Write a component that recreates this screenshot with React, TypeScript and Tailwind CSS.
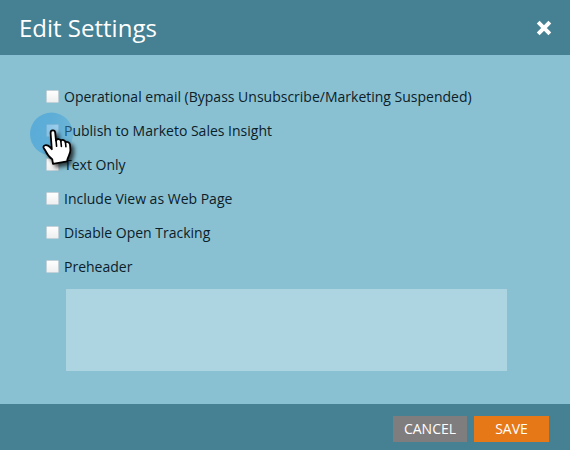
import React from 'react';

const OPTIONS = [
  'Operational email (Bypass Unsubscribe/Marketing Suspended)',
  'Publish to Marketo Sales Insight',
  'Text Only',
  'Include View as Web Page',
  'Disable Open Tracking',
  'Preheader',
];

function CloseIcon() {
  return (
    <svg width="16" height="16" viewBox="0 0 16 16" className="block">
      <path d="M3.6 3.6 12.4 12.4 M12.4 3.6 3.6 12.4" stroke="#fff" strokeWidth="4" strokeLinecap="square" strokeLinejoin="round" />
    </svg>
  );
}

function Pointer() {
  return (
    <svg width="60" height="70" viewBox="0 0 60 70" className="pointer-events-none absolute left-[-21px] top-[27px] overflow-visible">
      <defs>
        <filter id="shadow" x="-30%" y="-30%" width="180%" height="180%">
          <feDropShadow dx="3" dy="3" stdDeviation="2" floodColor="#000" floodOpacity="0.7" />
        </filter>
        <linearGradient id="halo" x1="0" y1="0" x2="1" y2="0.3">
          <stop offset="0" stopColor="#3d9fda" stopOpacity="0.62" />
          <stop offset="0.5" stopColor="#3d9fda" stopOpacity="0.58" />
          <stop offset="1" stopColor="#3d9fda" stopOpacity="0.36" />
        </linearGradient>
      </defs>
      <circle cx="26.5" cy="27" r="21.5" fill="url(#halo)" />
      <path
        filter="url(#shadow)"
        d="M25.6 26.2C25.3 22.8 29.8 22.5 30.2 25.6L31 33.6C32 31.3 35.3 31.6 35.8 33.9C37.2 32.2 40 33 40.5 35.2C42.2 34.2 44.6 35.4 45 37.6L45.4 43C45.6 47 42.6 49.5 42.1 54.3L28 56.9L27.2 52.2C23.6 49.8 21.9 46.8 20.5 43.8C19.7 42.1 18.2 41.3 18.4 40C18.9 37.5 22.6 37.6 25 40.2L26.8 42.2Z"
        fill="#fff"
        stroke="#000"
        strokeWidth="1.8"
        strokeLinejoin="round"
      />
      <path d="M31 33 31.6 39.3 M35.8 33.9 36.4 39.4 M40.5 35.2 40.9 39.8" stroke="#000" strokeWidth="1.6" strokeLinecap="round" />
    </svg>
  );
}

export default function App() {
  return (
    <div className="flex h-[450px] w-[570px] flex-col overflow-hidden bg-[#89c1d3] font-['Open_Sans',sans-serif]">
      <header className="flex h-[55px] shrink-0 items-center justify-between bg-[#468093] pl-[19px] pr-[18px]">
        <h1 className="text-[24px] leading-[54px] text-white">Edit Settings</h1>
        <button type="button" aria-label="Close">
          <CloseIcon />
        </button>
      </header>
      <main className="flex grow flex-col pl-[46px] pt-[25px]">
        <div className="relative flex flex-col">
          {OPTIONS.map((option) => (
            <label key={option} className="flex h-[34px] items-center gap-[5px] pb-px text-[14px] leading-[33px] text-[#0c2029]">
              <span className="size-[13px] rounded-[1px] border border-[#c3d2d8] bg-linear-to-b from-[#fefefe] to-[#eeeff0]" />
              <span className="whitespace-nowrap">{option}</span>
            </label>
          ))}
          <Pointer />
        </div>
        <div className="ml-5 mt-[5px] h-[82px] w-[441px] bg-[#acd4e1]" />
      </main>
      <footer className="flex h-[46px] shrink-0 items-start justify-end gap-[7px] bg-[#468093] pr-[21px] pt-3 text-[14px] leading-[26px] text-white">
        <button type="button" className="h-[26px] w-[74px] bg-[#807d7e]">CANCEL</button>
        <button type="button" className="h-[26px] w-[75px] bg-[#e77817]">SAVE</button>
      </footer>
    </div>
  );
}
